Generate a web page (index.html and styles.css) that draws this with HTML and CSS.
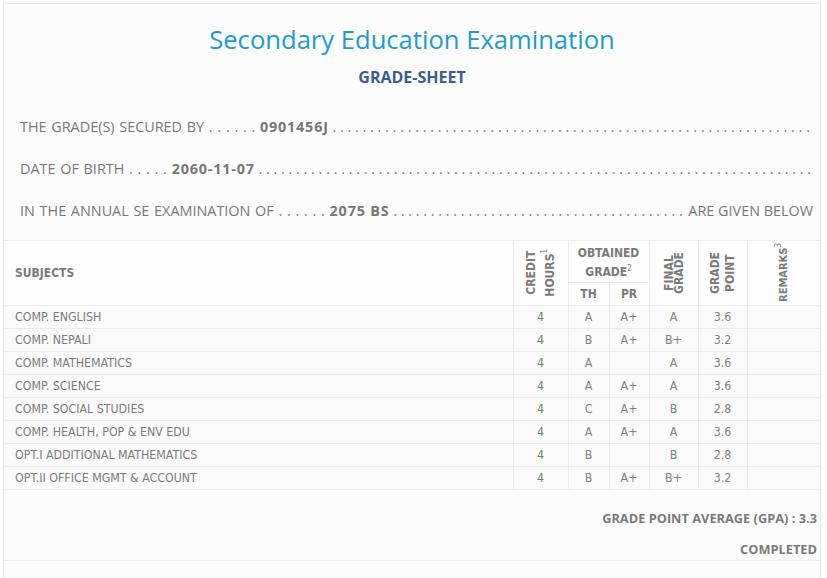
FILE: index.html
```html
<!DOCTYPE html>
<html>
<head>
<meta charset="utf-8">
<link rel="stylesheet" href="styles.css">
</head>
<body>
<div class="sheet">
  <header class="head">
    <h1 class="title">Secondary Education Examination</h1>
    <h2 class="subtitle">GRADE-SHEET</h2>
  </header>
  <div class="info">
    <div class="line"><span class="lbl">THE GRADE(S) SECURED BY . . . . . .&nbsp;</span><b class="val">0901456J</b><span class="fill">&nbsp;. . . . . . . . . . . . . . . . . . . . . . . . . . . . . . . . . . . . . . . . . . . . . . . . . . . . . . . . . . . . . . . . . . . . . . . . . . . . . . . . . . . . . . . . . . . . . . . . . . . . . . . .</span></div>
    <div class="line"><span class="lbl">DATE OF BIRTH . . . . .&nbsp;</span><b class="val">2060-11-07</b><span class="fill">&nbsp;. . . . . . . . . . . . . . . . . . . . . . . . . . . . . . . . . . . . . . . . . . . . . . . . . . . . . . . . . . . . . . . . . . . . . . . . . . . . . . . . . . . . . . . . . . . . . . . . . . . . . . . . . . . . . . . . . . .</span></div>
    <div class="line"><span class="lbl">IN THE ANNUAL SE EXAMINATION OF . . . . . .&nbsp;</span><b class="val">2075 BS</b><span class="fill">&nbsp;. . . . . . . . . . . . . . . . . . . . . . . . . . . . . . . . . . . . . . . . . . . . . . . . . . . . . . . . . . . . . . . . . . . . . . . . . . . . . . . . . . . . . . .</span><span class="end">&nbsp;ARE GIVEN BELOW</span></div>
  </div>
  <table class="grades">
    <colgroup>
      <col class="c-sub"><col class="c-cr"><col class="c-th"><col class="c-pr"><col class="c-fg"><col class="c-gp"><col class="c-rm">
    </colgroup>
    <thead>
      <tr class="h1row">
        <th rowspan="2" class="sub">SUBJECTS</th>
        <th rowspan="2" class="vert cr"><span>CREDIT<br>HOURS<sup>1</sup></span></th>
        <th colspan="2" class="obt">OBTAINED<br>GRADE<sup>2</sup></th>
        <th rowspan="2" class="vert fg"><span>FINAL<br>GRADE</span></th>
        <th rowspan="2" class="vert gp"><span>GRADE<br>POINT</span></th>
        <th rowspan="2" class="vert rm"><span>REMARKS<sup>3</sup></span></th>
      </tr>
      <tr class="h2row">
        <th>TH</th>
        <th>PR</th>
      </tr>
    </thead>
    <tbody>
      <tr><td class="sub">COMP. ENGLISH</td><td class="cr">4</td><td>A</td><td>A+</td><td>A</td><td>3.6</td><td></td></tr>
      <tr><td class="sub">COMP. NEPALI</td><td class="cr">4</td><td>B</td><td>A+</td><td>B+</td><td>3.2</td><td></td></tr>
      <tr><td class="sub">COMP. MATHEMATICS</td><td class="cr">4</td><td>A</td><td></td><td>A</td><td>3.6</td><td></td></tr>
      <tr><td class="sub">COMP. SCIENCE</td><td class="cr">4</td><td>A</td><td>A+</td><td>A</td><td>3.6</td><td></td></tr>
      <tr><td class="sub">COMP. SOCIAL STUDIES</td><td class="cr">4</td><td>C</td><td>A+</td><td>B</td><td>2.8</td><td></td></tr>
      <tr><td class="sub">COMP. HEALTH, POP &amp; ENV EDU</td><td class="cr">4</td><td>A</td><td>A+</td><td>A</td><td>3.6</td><td></td></tr>
      <tr><td class="sub">OPT.I ADDITIONAL MATHEMATICS</td><td class="cr">4</td><td>B</td><td></td><td>B</td><td>2.8</td><td></td></tr>
      <tr><td class="sub">OPT.II OFFICE MGMT &amp; ACCOUNT</td><td class="cr">4</td><td>B</td><td>A+</td><td>B+</td><td>3.2</td><td></td></tr>
    </tbody>
  </table>
  <div class="summary">
    <p class="sum-line">GRADE POINT AVERAGE (GPA) : 3.3</p>
    <p class="sum-line">COMPLETED</p>
  </div>
  <div class="tail"></div>
</div>
</body>
</html>
```
FILE: styles.css
```css
html, body {
  margin: 0;
  padding: 0;
  background: #ffffff;
}
body {
  padding: 3px 6px 0 3px;
}
.sheet {
  border: 1px solid #e8e8e8;
  background: #fcfcfc;
  color: #777777;
}
.head {
  text-align: center;
  padding-top: 21px;
}
.title {
  margin: 0;
  font-family: "Open Sans", sans-serif;
  font-stretch: 96%;
  font-weight: 400;
  font-size: 25.6px;
  line-height: 30px;
  color: #1b9ccf;
}
.subtitle {
  margin: 12px 0 0;
  font-family: "Open Sans", sans-serif;
  font-stretch: 96%;
  font-weight: 700;
  font-size: 16px;
  line-height: 20px;
  color: #3a5d8f;
}
.info {
  padding: 19px 7px 0 16px;
  font-family: "Open Sans", sans-serif;
  font-size: 14.4px;
  color: #777777;
}
.line {
  display: flex;
  height: 42px;
  line-height: 42px;
  white-space: nowrap;
}
.lbl, .val, .end {
  flex: none;
}
.lbl {
  word-spacing: 1px;
}
.val {
  font-weight: 700;
  letter-spacing: 0.8px;
}
.fill {
  flex: 1;
  overflow: hidden;
  min-width: 0;
}
.grades {
  margin-top: 8px;
  width: 100%;
  border-collapse: collapse;
  table-layout: fixed;
  font-family: "DejaVu Sans Condensed", "DejaVu Sans", sans-serif;
  font-size: 12.3px;
  color: #808080;
}
.c-sub { width: 509px; }
.c-cr { width: 55px; }
.c-th { width: 41px; }
.c-pr { width: 40px; }
.c-fg { width: 49px; }
.c-gp { width: 49px; }
.c-rm { width: auto; }
.grades th, .grades td {
  border: 1px solid #ebebeb;
  padding: 0;
  text-align: center;
}
.grades tr > :first-child { border-left: none; }
.grades tr > :last-child { border-right: none; }
.grades thead th {
  font-weight: 700;
  font-size: 12px;
  color: #7a7a7a;
  background: #fdfdfd;
}
.h1row { height: 41px; }
.h2row { height: 23px; }
.grades th.sub {
  text-align: left;
  padding-left: 11px;
}
.obt {
  line-height: 19px;
  padding-top: 3px !important;
}
.grades sup {
  font-size: 8px;
  line-height: 0;
  vertical-align: 5px;
  font-weight: 400;
}
.grades thead th.vert {
  vertical-align: middle;
  font-size: 12px;
}
.grades thead th.rm {
  font-size: 11px;
}
.vert span {
  display: inline-block;
  writing-mode: vertical-rl;
  transform: rotate(180deg);
  text-align: center;
}
.cr span { line-height: 19px; margin-top: 3px; }
.fg span { line-height: 10px; margin-top: 2px; }
.gp span { line-height: 15px; margin-top: 2px; }
.rm span { line-height: 14px; margin-top: 2px; }
.grades tbody tr { height: 23px; }
.grades tbody td {
  background: #fafafa;
  line-height: 21px;
}
.grades td.sub {
  text-align: left;
  padding-left: 11px;
  color: #7a7a7a;
}
.grades td.cr {
  color: #5e8a5e;
}
.summary {
  padding: 18px 3px 1px 0;
  border-bottom: 1px solid #ebebeb;
  text-align: right;
  font-family: "Open Sans", sans-serif;
  font-stretch: 90%;
  font-weight: 700;
  font-size: 12.8px;
  color: #7a7a7a;
}
.sum-line {
  margin: 0 0 11px;
  line-height: 20px;
}
.sum-line:last-child {
  margin-bottom: 0;
}
.tail {
  height: 40px;
}
```
